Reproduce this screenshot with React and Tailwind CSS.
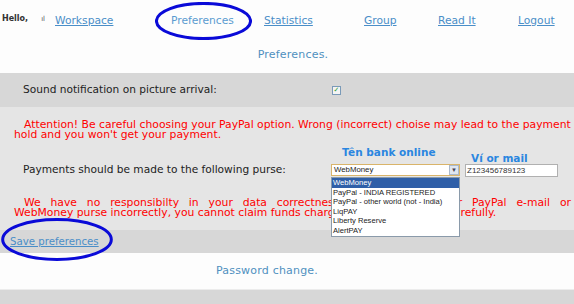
import React from "react";

const navItems = [
  { label: "Workspace", w: "w-[116px]" },
  { label: "Preferences", w: "w-[93px]", active: true },
  { label: "Statistics", w: "w-[100px]" },
  { label: "Group", w: "w-[74px]" },
  { label: "Read It", w: "w-[80px]" },
  { label: "Logout", w: "w-[56px]" },
];

const purses = [
  "WebMoney",
  "PayPal - INDIA REGISTERED",
  "PayPal - other world (not - India)",
  "LiqPAY",
  "Liberty Reserve",
  "AlertPAY",
];

function Ellipse({ className }) {
  return (
    <svg className={`pointer-events-none absolute ${className}`} viewBox="0 0 100 40" preserveAspectRatio="none">
      <ellipse cx="50" cy="20" rx="48.5" ry="18.5" fill="none" stroke="#0a0ad8" strokeWidth="3" vectorEffect="non-scaling-stroke" />
    </svg>
  );
}

export default function App() {
  return (
    <div className="relative h-[304px] w-[574px] overflow-hidden bg-[#fdfdfd] font-['DejaVu_Sans',sans-serif] text-[#222]">
      {/* Top nav */}
      <nav className="flex h-[38px] items-center">
        <div className="flex w-[55px] items-center pl-[2px] text-[8px] font-bold text-[#333]">
          <span>Hello,</span>
          <span className="ml-[13px] text-[7px] font-normal text-[#555]">ıl</span>
        </div>
        {navItems.map((n) => (
          <div key={n.label} className={`${n.w} shrink-0`}>
            <a
              href="#"
              className={`text-[10.7px] ${n.active ? "text-[#5a9bd0] no-underline" : "text-[#4a8ec8] underline"}`}
            >
              {n.label}
            </a>
          </div>
        ))}
      </nav>

      <div className="flex h-[35px] items-center justify-center pl-[12px] text-[11px] tracking-[0.2px] text-[#4f90bf]">
        Preferences.
      </div>

      {/* Sound row */}
      <div className="flex h-[34px] items-center bg-[#d7d7d7] pl-[23px] text-[10.6px]">
        <span className="w-[309px]">Sound notification on picture arrival:</span>
        <span className="flex h-[9px] w-[9px] items-center justify-center border border-[#7a9ab8] bg-[#f4f4f4] text-[7px] leading-none font-bold text-[#2a9a2a]">
          ✓
        </span>
      </div>

      {/* Payment block */}
      <div className="relative h-[123px] bg-[#e5e5e5] pt-[13px] text-[#ff0000]">
        <div className="text-[10.8px] leading-[10px]">
          <p className="whitespace-nowrap pl-[24px]">
            Attention! Be careful choosing your PayPal option. Wrong (incorrect) choise may lead to the payment
          </p>
          <p className="whitespace-nowrap pl-[14px]">hold and you won't get your payment.</p>
        </div>

        <div className="mt-[6px] flex pl-[23px] text-[#222]">
          <div className="w-[308px] pt-[16px] text-[10.6px]">Payments should be made to the following purse:</div>
          <div className="relative w-[134px]">
            <div className="pl-[11px] text-[10.5px] leading-[13px] font-bold text-[#2a86e0]">Tên bank online</div>
            <div className="mt-[5px] flex h-[12px] w-[129px] items-center border border-[#d9b46a] bg-white pl-[2px] font-['Liberation_Sans',sans-serif] text-[7.8px] text-[#222]">
              <span className="flex-1">WebMoney</span>
              <span className="flex h-[10px] w-[10px] items-center justify-center border border-[#a9b8cc] bg-[#dfe6f0] text-[6px] text-[#445]">
                ▼
              </span>
            </div>
            <ul className="absolute left-0 top-[31px] z-10 w-[129px] border border-[#8a9aaa] bg-white font-['Liberation_Sans',sans-serif] text-[7.6px] leading-[9.6px] text-[#222]">
              {purses.map((p, i) => (
                <li key={p} className={`pl-[1px] ${i === 0 ? "bg-[#2f5fa8] text-white" : ""}`}>
                  {p}
                </li>
              ))}
            </ul>
          </div>
          <div>
            <div className="mt-[6px] pl-[6px] text-[10.5px] leading-[13px] font-bold text-[#2a86e0]">Ví or mail</div>
            <div className="mt-[-1px] flex h-[13px] w-[93px] items-center border border-[#b0b0b0] bg-white pl-[1px] font-['Liberation_Sans',sans-serif] text-[8px] text-[#333]">
              Z123456789123
            </div>
          </div>
        </div>

        <div className="mt-[20px] text-[10.8px] leading-[10px]">
          <p className="ml-[14px] w-[557px] pl-[10px] text-justify [text-align-last:justify]">
            We have no responsibilty in your data correctness: if you enter your PayPal e-mail or
          </p>
          <p className="whitespace-nowrap pl-[14px]">
            WebMoney purse incorrectly, you cannot claim funds charged to it. Please fill in carefully.
          </p>
        </div>
      </div>

      {/* Save row */}
      <div className="flex h-[23px] items-center bg-[#d7d7d7] pl-[10px]">
        <a href="#" className="text-[10.2px] text-[#4a8ec8] underline">
          Save preferences
        </a>
      </div>

      <div className="flex h-[37px] items-center justify-center border-b border-[#ececec] pr-[40px] text-[11px] tracking-[0.2px] text-[#4f90bf]">
        Password change.
      </div>
      <div className="h-[14px] bg-[#d7d7d7]" />

      <Ellipse className="left-[155px] top-[2px] h-[38px] w-[97px]" />
      <Ellipse className="left-[1px] top-[218px] h-[43px] w-[112px]" />
    </div>
  );
}
